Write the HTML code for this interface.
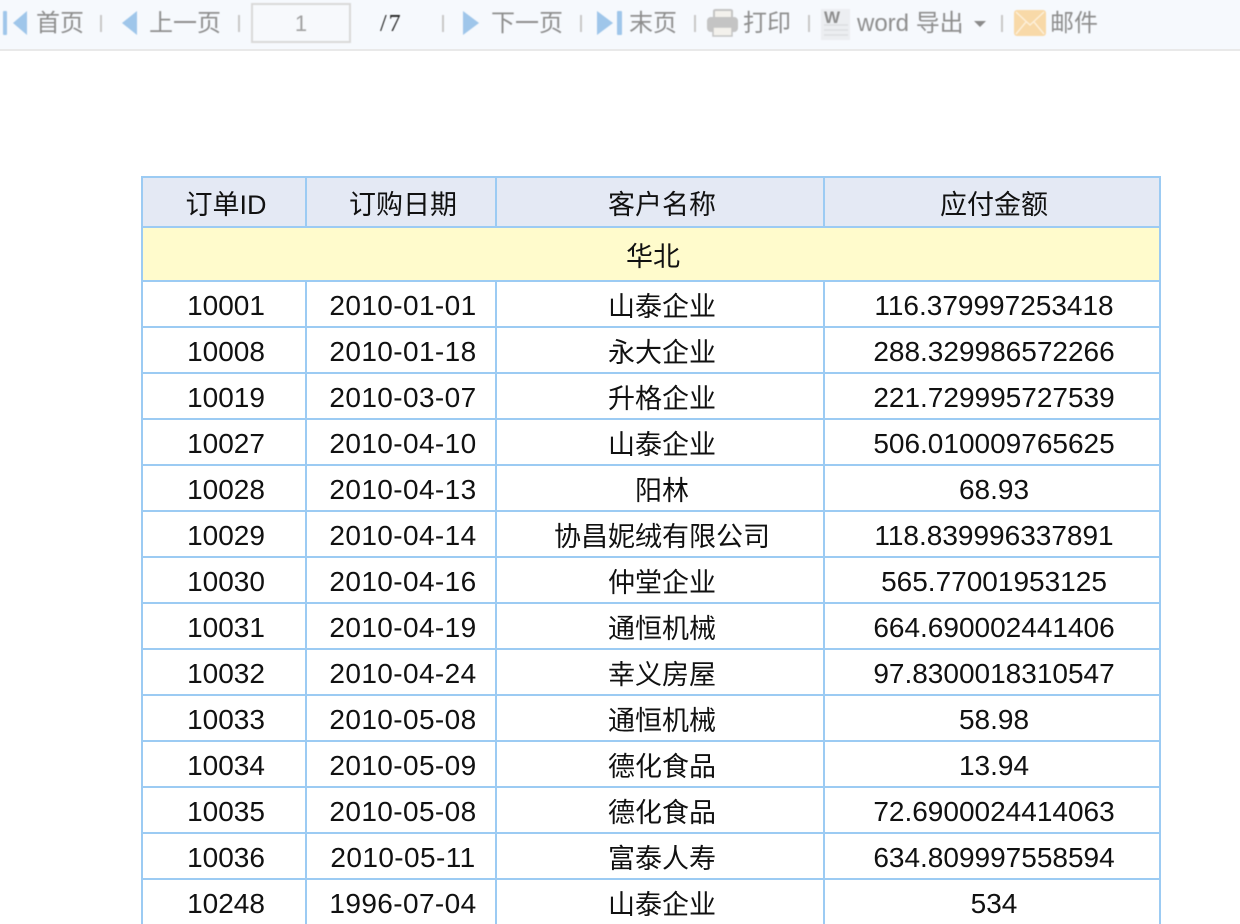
<!DOCTYPE html>
<html lang="zh">
<head>
<meta charset="utf-8">
<title>报表</title>
<style>
html,body{margin:0;padding:0;width:1240px;height:924px;overflow:hidden;background:#fff}
body{position:relative;font-family:"Liberation Sans","Noto Sans CJK SC",sans-serif}
#bar{position:absolute;left:0;top:0;width:1240px;height:49px;background:#f6f9fd;border-bottom:2px solid #e9e9e9}
#in{position:absolute;left:0;top:0;width:1240px;height:49px;filter:blur(.5px)}
#in span{position:absolute;top:6px;height:36px;line-height:36px;font-size:24px;color:#8e8e8e;white-space:nowrap}
#in i{position:absolute;top:15px;width:2px;height:17px;background:#c8c8c8}
#in svg{position:absolute;left:0;top:0}
#inp{position:absolute;left:251px;top:3px;width:96px;height:36px;border:2px solid #d9d9d9;background:#f7f9fc;text-align:center;line-height:37px;font-size:22px;color:#a0a0a0}
#in span.pg{left:380px;font-family:"Liberation Serif",serif;color:#222;font-size:24px;letter-spacing:2px}
table{position:absolute;left:141px;top:176px;border-collapse:collapse;table-layout:fixed;width:1020px}
td{border:2px solid #9ccbf3;padding:3px 0 0 4px;text-align:center;font-size:28px;color:#111;line-height:36px;white-space:nowrap;overflow:hidden;height:41px}
td:nth-child(2){letter-spacing:.4px}
td:nth-child(3){padding-top:5px;height:39px;font-size:27px;letter-spacing:0}
tr.h td{background:#e4e9f4;height:43px;padding-top:5px;letter-spacing:0;font-size:27px}
tr.g td{background:#fffbcc;height:46px;padding-top:6px;letter-spacing:0;font-size:27px}
</style>
</head>
<body>
<div id="bar"><div id="in">
<svg width="1240" height="49" viewBox="0 0 1240 49">
<rect x="3" y="11" width="4" height="24" rx="1" fill="#9fc6ea"/>
<path d="M27 11V35L13 23Z" fill="#9fc6ea"/>
<path d="M137 11V35L122 23Z" fill="#9fc6ea"/>
<path d="M463 11V35L479 23Z" fill="#9fc6ea"/>
<path d="M597 11V35L613 23Z" fill="#9fc6ea"/>
<rect x="617" y="11" width="5" height="24" rx="1" fill="#9fc6ea"/>
<path d="M714 18V11Q714 10 716 10H730Q732 10 732 11V18Z" fill="#f3f1ec" stroke="#c4c4c4" stroke-width="2"/>
<rect x="707" y="17" width="31" height="15" rx="4" fill="#c4c4c4"/>
<rect x="713" y="27" width="19" height="9" fill="#f3f1ec" stroke="#c4c4c4" stroke-width="1.5"/>
<rect x="821" y="9" width="29" height="31" fill="#eceef1"/>
<path d="M824 25H848M824 30H848M824 35H848" stroke="#dcdee1" stroke-width="1.5"/>
<text x="824" y="23" font-family="Liberation Sans,sans-serif" font-size="17" font-weight="bold" fill="#8f8f8f">W</text>
<path d="M974 21H986L980 27Z" fill="#8a8a8a"/>
<rect x="1014" y="10" width="32" height="26" rx="3" fill="#f8d9a8"/>
<path d="M1016 12L1030 25L1044 12M1016 34L1026 22M1044 34L1034 22" fill="none" stroke="#fdf0da" stroke-width="1.5"/>
</svg>
<span style="left:36px">首页</span>
<i style="left:100px"></i>
<span style="left:149px">上一页</span>
<i style="left:238px"></i>
<div id="inp">1</div>
<span class="pg">/7</span>
<i style="left:442px"></i>
<span style="left:491px">下一页</span>
<i style="left:580px"></i>
<span style="left:629px">末页</span>
<i style="left:694px"></i>
<span style="left:743px">打印</span>
<i style="left:808px"></i>
<span style="left:857px">word 导出</span>
<i style="left:1001px"></i>
<span style="left:1050px">邮件</span>
</div></div>
<table>
<colgroup><col style="width:164px"><col style="width:190px"><col style="width:328px"><col style="width:336px"></colgroup>
<tr class="h"><td>订单ID</td><td>订购日期</td><td>客户名称</td><td>应付金额</td></tr>
<tr class="g"><td colspan="4">华北</td></tr>
<tr><td>10001</td><td>2010-01-01</td><td>山泰企业</td><td>116.379997253418</td></tr>
<tr><td>10008</td><td>2010-01-18</td><td>永大企业</td><td>288.329986572266</td></tr>
<tr><td>10019</td><td>2010-03-07</td><td>升格企业</td><td>221.729995727539</td></tr>
<tr><td>10027</td><td>2010-04-10</td><td>山泰企业</td><td>506.010009765625</td></tr>
<tr><td>10028</td><td>2010-04-13</td><td>阳林</td><td>68.93</td></tr>
<tr><td>10029</td><td>2010-04-14</td><td>协昌妮绒有限公司</td><td>118.839996337891</td></tr>
<tr><td>10030</td><td>2010-04-16</td><td>仲堂企业</td><td>565.77001953125</td></tr>
<tr><td>10031</td><td>2010-04-19</td><td>通恒机械</td><td>664.690002441406</td></tr>
<tr><td>10032</td><td>2010-04-24</td><td>幸义房屋</td><td>97.8300018310547</td></tr>
<tr><td>10033</td><td>2010-05-08</td><td>通恒机械</td><td>58.98</td></tr>
<tr><td>10034</td><td>2010-05-09</td><td>德化食品</td><td>13.94</td></tr>
<tr><td>10035</td><td>2010-05-08</td><td>德化食品</td><td>72.6900024414063</td></tr>
<tr><td>10036</td><td>2010-05-11</td><td>富泰人寿</td><td>634.809997558594</td></tr>
<tr><td>10248</td><td>1996-07-04</td><td>山泰企业</td><td>534</td></tr>
</table>
</body>
</html>
